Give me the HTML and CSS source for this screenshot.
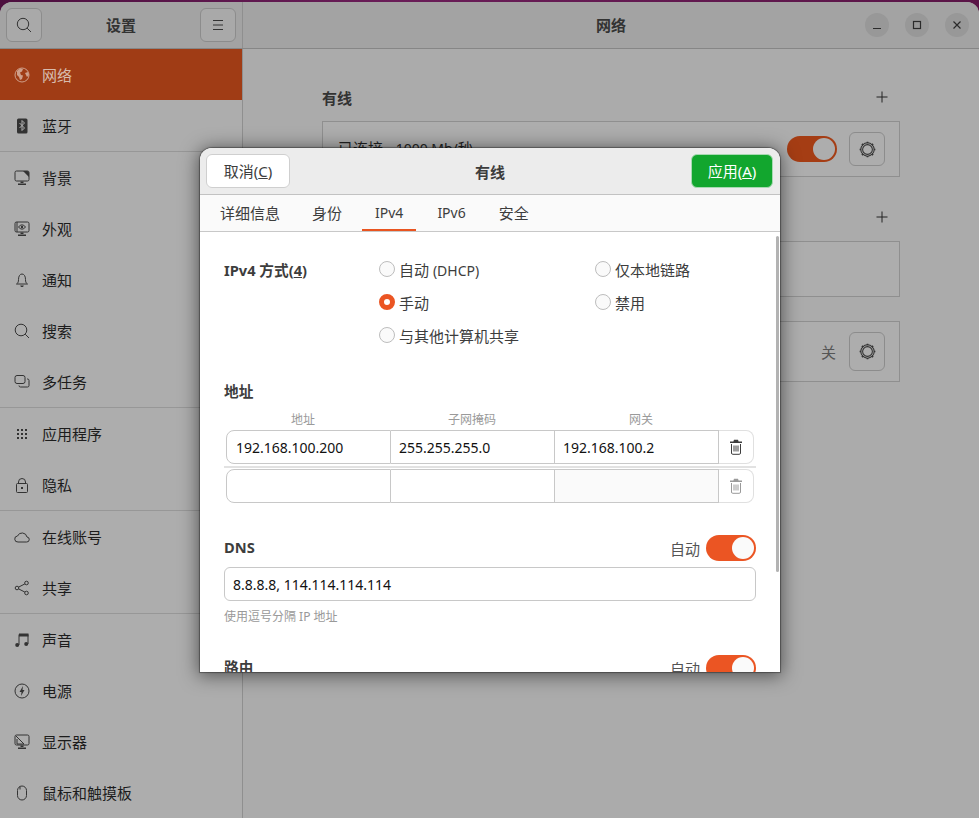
FILE: index.html
```html
<!DOCTYPE html>
<html lang="zh">
<head>
<meta charset="utf-8">
<title>设置</title>
<link rel="stylesheet" href="styles.css">
</head>
<body>
<div class="window">
  <header class="titlebar">
    <div class="tb-left">
      <button class="tb-btn"><svg viewBox="0 0 16 16" class="ic"><circle cx="7" cy="7" r="5.700"/><path d="M11.100 11.100l3.900 3.900"/></svg></button>
      <div class="tb-title">设置</div>
      <button class="tb-btn"><svg viewBox="0 0 16 16" class="ic"><path d="M3 3.500h10M3 8h10M3 12.500h10"/></svg></button>
    </div>
    <div class="tb-right">
      <div class="tb-title">网络</div>
      <div class="wm">
        <span class="wm-btn"><svg viewBox="0 0 16 16" class="ic ic-wm"><path d="M4 11.500h8"/></svg></span>
        <span class="wm-btn"><svg viewBox="0 0 16 16" class="ic ic-wm"><rect x="4.500" y="4.500" width="7" height="7"/></svg></span>
        <span class="wm-btn"><svg viewBox="0 0 16 16" class="ic ic-wm"><path d="M4.500 4.500l7 7M11.500 4.500l-7 7"/></svg></span>
      </div>
    </div>
  </header>
  <div class="panes">
    <nav class="sidebar">
      <div class="item active"><svg viewBox="0 0 16 16" class="ic"><circle cx="8" cy="8" r="7"/><path class="fill" d="M3 4l3-2.500 3 .5-1 2.500-2 1 1 2.500 2 .5-1 3.500-2 1-1-3-2-2zM11 6l3-1 1 3-2 2z"/></svg><span>网络</span></div>
      <div class="item"><svg viewBox="0 0 16 16" class="ic"><rect class="fill" x="3" y="0.500" width="10.500" height="15" rx="1.500"/><path class="knock" d="M5.500 5l5 5-2.500 2.500v-10l2.500 2.500-5 5"/></svg><span>蓝牙</span></div>
      <div class="sep"></div>
      <div class="item"><svg viewBox="0 0 16 16" class="ic"><path d="M9 1H2.500A1.500 1.500 0 0 0 1 2.500v7A1.500 1.500 0 0 0 2.500 11h11a1.500 1.500 0 0 0 1.500-1.500V2.500A1.500 1.500 0 0 0 13.500 1z"/><path class="fill" d="M9 1h4.500L15 2.500V7zM6.500 11.500h3v1.500h-3zM4 13.500h8V15H4z"/></svg><span>背景</span></div>
      <div class="item"><svg viewBox="0 0 16 16" class="ic"><rect x="1" y="1" width="14" height="10" rx="1.500"/><path d="M3 1v10M4.500 6c2-2.800 5-2.800 7 0-2 2.800-5 2.800-7 0z"/><circle class="fill" cx="8" cy="6" r="1.200"/><path class="fill" d="M6.500 11.500h3v1.500h-3zM4 13.500h8V15H4z"/></svg><span>外观</span></div>
      <div class="item"><svg viewBox="0 0 16 16" class="ic"><path d="M2.500 12h11c-1.500-1-2-2-2-4.500C11.500 4 10 2 8 2S4.500 4 4.500 7.500C4.500 10 4 11 2.500 12z"/><path class="fill" d="M6.200 13.500h3.600c-.3 1-1 1.500-1.800 1.500s-1.500-.5-1.800-1.500z"/></svg><span>通知</span></div>
      <div class="item"><svg viewBox="0 0 16 16" class="ic"><circle cx="7" cy="7" r="5.800"/><path d="M11.200 11.200l3.800 3.800"/></svg><span>搜索</span></div>
      <div class="item"><svg viewBox="0 0 16 16" class="ic"><rect x="1" y="1.500" width="10" height="8" rx="2"/><path d="M13 5h.500A1.500 1.500 0 0 1 15 6.500v5a1.500 1.500 0 0 1-1.500 1.500h-7A1.500 1.500 0 0 1 5 11.500"/></svg><span>多任务</span></div>
      <div class="sep"></div>
      <div class="item"><svg viewBox="0 0 16 16" class="ic"><path class="fill" d="M3 3h2v2H3zM7 3h2v2H7zM11 3h2v2h-2zM3 7h2v2H3zM7 7h2v2H7zM11 7h2v2h-2zM3 11h2v2H3zM7 11h2v2H7zM11 11h2v2h-2z"/></svg><span>应用程序</span></div>
      <div class="item"><svg viewBox="0 0 16 16" class="ic"><rect x="2.500" y="6.500" width="11" height="9" rx="1"/><path d="M4.500 6.500V5a3.500 3.500 0 0 1 7 0v1.500"/><rect class="fill" x="7" y="10" width="2" height="2"/></svg><span>隐私</span></div>
      <div class="sep"></div>
      <div class="item"><svg viewBox="0 0 16 16" class="ic"><path d="M4 13h8.500a2.500 2.500 0 0 0 .500-5 5 5 0 0 0-9.500-1A3 3 0 0 0 4 13z"/></svg><span>在线账号</span></div>
      <div class="item"><svg viewBox="0 0 16 16" class="ic"><circle cx="3" cy="8" r="1.800"/><circle cx="12.500" cy="3" r="1.800"/><circle cx="12.500" cy="13" r="1.800"/><path d="M4.600 7.100l6.300-3.200M4.600 8.900l6.300 3.200"/></svg><span>共享</span></div>
      <div class="sep"></div>
      <div class="item"><svg viewBox="0 0 16 16" class="ic"><path d="M5 13V2.500h9V12"/><path class="fill" d="M5 1.500h9.500v3H5z"/><circle class="fill" cx="3.200" cy="13" r="2"/><circle class="fill" cx="12.200" cy="12" r="2"/></svg><span>声音</span></div>
      <div class="item"><svg viewBox="0 0 16 16" class="ic"><circle cx="8" cy="8" r="7"/><path class="fill" d="M9 3L5.500 9h2L7 13l3.500-6h-2z"/></svg><span>电源</span></div>
      <div class="item"><svg viewBox="0 0 16 16" class="ic"><rect x="1" y="1" width="14" height="10" rx="1.500"/><path d="M2 2l8 8H3V5"/><path class="fill" d="M6.500 11.500h3v1.500h-3zM4 13.500h8V15H4z"/></svg><span>显示器</span></div>
      <div class="item"><svg viewBox="0 0 16 16" class="ic"><rect x="3.500" y="1" width="9" height="14" rx="4.500"/><path d="M6 1.500v3"/></svg><span>鼠标和触摸板</span></div>
    </nav>
    <main class="content">
      <div class="sec-head"><h2>有线</h2><svg viewBox="0 0 16 16" class="ic plus"><path d="M8 2.500v11M2.500 8h11"/></svg></div>
      <div class="card card-a">
        <span class="conn">已连接 - <span class="lat">1000 Mb/</span>秒</span>
        <span class="switch switch-dim"><i></i></span>
        <button class="gear-btn"><svg viewBox="0 0 16 16" class="ic gear"><circle cx="8" cy="8" r="6.300"/><circle cx="8" cy="8" r="4.600"/><path class="dash" d="M8 .6v1.400M8 14v1.400M.6 8H2M14 8h1.400M2.800 2.800l1 1M12.200 12.200l1 1M2.800 13.200l1-1M12.200 3.800l1-1"/></svg></button>
      </div>
      <div class="sec-head sec-2"><h2>&nbsp;</h2><svg viewBox="0 0 16 16" class="ic plus"><path d="M8 2.500v11M2.500 8h11"/></svg></div>
      <div class="card card-b"></div>
      <div class="card card-c">
        <span class="off">关</span>
        <button class="gear-btn gear-tall"><svg viewBox="0 0 16 16" class="ic gear"><circle cx="8" cy="8" r="6.300"/><circle cx="8" cy="8" r="4.600"/><path class="dash" d="M8 .6v1.400M8 14v1.400M.6 8H2M14 8h1.400M2.800 2.800l1 1M12.200 12.200l1 1M2.800 13.200l1-1M12.200 3.800l1-1"/></svg></button>
      </div>
    </main>
  </div>
</div>

<section class="dialog">
  <header class="dlg-head">
    <button class="btn-cancel">取消(<u>C</u>)</button>
    <div class="dlg-title">有线</div>
    <button class="btn-apply">应用(<u>A</u>)</button>
  </header>
  <div class="tabs">
    <span class="tab t1">详细信息</span>
    <span class="tab t2">身份</span>
    <span class="tab t3 on lat">IPv4</span>
    <span class="tab t4 lat">IPv6</span>
    <span class="tab t5">安全</span>
  </div>
  <div class="dlg-body">
    <div class="scrollbar"></div>
    <div class="method">
      <div class="bold method-label">IPv4 方式(<u>4</u>)</div>
      <div class="radios">
        <label class="radio"><i></i><span>自动 <span class="lat">(DHCP)</span></span></label>
        <label class="radio"><i></i><span>仅本地链路</span></label>
        <label class="radio sel"><i></i><span>手动</span></label>
        <label class="radio"><i></i><span>禁用</span></label>
        <label class="radio"><i></i><span>与其他计算机共享</span></label>
      </div>
    </div>
    <div class="bold addr-title">地址</div>
    <div class="cols"><span>地址</span><span>子网掩码</span><span>网关</span></div>
    <div class="addr-row">
      <div class="cell first">192.168.100.200</div>
      <div class="cell">255.255.255.0</div>
      <div class="cell">192.168.100.2</div>
      <div class="del"><svg viewBox="0 0 16 16" class="ic trash"><path class="fill" d="M6 .8h4l.6 1.700H14v1.500H2V2.500h3.400z"/><path d="M3.500 5v9a1.300 1.300 0 0 0 1.300 1.300h6.400a1.300 1.300 0 0 0 1.300-1.300V5M6 6.500v6M8 6.500v6M10 6.500v6"/></svg></div>
    </div>
    <div class="addr-line"></div>
    <div class="addr-row">
      <div class="cell first"></div>
      <div class="cell"></div>
      <div class="cell shade"></div>
      <div class="del dim"><svg viewBox="0 0 16 16" class="ic trash"><path class="fill" d="M6 .8h4l.6 1.700H14v1.500H2V2.500h3.400z"/><path d="M3.500 5v9a1.300 1.300 0 0 0 1.300 1.300h6.400a1.300 1.300 0 0 0 1.300-1.300V5M6 6.500v6M8 6.500v6M10 6.500v6"/></svg></div>
    </div>
    <div class="head-row dns-head">
      <span class="bold">DNS</span>
      <span class="auto">自动<span class="switch"><i></i></span></span>
    </div>
    <div class="entry">8.8.8.8, 114.114.114.114</div>
    <div class="hint">使用逗号分隔 IP 地址</div>
    <div class="head-row route-head">
      <span class="bold">路由</span>
      <span class="auto">自动<span class="switch"><i></i></span></span>
    </div>
  </div>
</section>
</body>
</html>
```
FILE: styles.css
```css
* { box-sizing: border-box; }
html, body { margin: 0; height: 100%; overflow: hidden; }
body {
  background: linear-gradient(90deg, #4c0f3e, #6a1d58 40%, #5a1547);
  font-family: "Noto Sans", "Noto Sans CJK SC", sans-serif;
  font-size: 15px;
  color: #1c1c1c;
}
button { font: inherit; padding: 0; }
.lat { font-size: 14px; }
.ic { width: 16px; height: 16px; fill: none; stroke: #333; stroke-width: 1; flex: none; display: block; }
.ic .fill { fill: #333; stroke: none; }
.ic .knock { stroke: #b0b0b0; fill: none; }

.window {
  margin-top: 2px;
  height: 816px;
  border-radius: 12px 12px 0 0;
  overflow: hidden;
  background: #ababab;
  display: flex;
  flex-direction: column;
}
.titlebar {
  height: 47px;
  flex: none;
  display: flex;
  background: #a3a3a3;
  border-bottom: 1px solid #868686;
}
.tb-left {
  width: 243px;
  flex: none;
  display: flex;
  align-items: center;
  justify-content: space-between;
  padding: 0 6px 1px;
  border-right: 1px solid #8f8f8f;
}
.tb-btn {
  width: 36px;
  height: 34px;
  border: 1px solid #8c8c8c;
  border-radius: 6px;
  background: #a9a9a9;
  display: flex;
  align-items: center;
  justify-content: center;
}
.tb-title { font-weight: 700; color: #333; }
.tb-right {
  flex: 1;
  display: flex;
  align-items: center;
  justify-content: center;
  position: relative;
  padding-bottom: 1px;
}
.wm { position: absolute; right: 10px; top: 11px; display: flex; gap: 16px; }
.wm-btn {
  width: 24px;
  height: 24px;
  border-radius: 50%;
  background: #989898;
  display: flex;
  align-items: center;
  justify-content: center;
}
.ic-wm { stroke: #2b2b2b; stroke-width: 1.200; }

.panes { flex: 1; display: flex; min-height: 0; }
.sidebar {
  width: 243px;
  flex: none;
  background: #adadad;
  border-right: 1px solid #8f8f8f;
}
.item {
  height: 51px;
  display: flex;
  align-items: center;
  gap: 12px;
  padding-left: 14px;
}
.item.active { background: #a03c15; color: #d8bcae; }
.item.active .ic { stroke: #cf9f8a; }
.item.active .ic .fill { fill: #cf9f8a; }
.sep { height: 1px; background: #979797; }

.content { flex: 1; padding: 36px 0 0 79px; }
.sec-head { width: 578px; height: 36px; display: flex; align-items: flex-start; justify-content: space-between; padding-right: 10px; }
.sec-head h2 { margin: 1px 0 0; font-size: 15px; font-weight: 700; color: #333; line-height: 24px; }
.sec-head .plus { margin-top: 4px; stroke: #222; }
.sec-2 { margin-top: 28px; }
.card {
  width: 578px;
  border: 1px solid #8f8f8f;
  background: #adadad;
  display: flex;
  align-items: center;
  justify-content: flex-end;
  padding-right: 14px;
}
.card-a { height: 56px; position: relative; }
.card-b { height: 56px; }
.card-c { height: 61px; margin-top: 24px; }
.conn { position: absolute; left: 15px; top: 15px; color: #222; }
.off { margin-right: 13px; color: #555; }
.gear-btn {
  width: 36px;
  height: 34px;
  border: 1px solid #8c8c8c;
  border-radius: 6px;
  background: #adadad;
  display: flex;
  align-items: center;
  justify-content: center;
}
.gear-tall { height: 39px; }
.gear { width: 17px; height: 17px; }
.gear circle { stroke-width: 1; }
.gear .dash { stroke-width: 1.600; }
.switch {
  width: 50px;
  height: 26px;
  border-radius: 13px;
  background: #eb5523;
  display: inline-flex;
  justify-content: flex-end;
  align-items: center;
  padding-right: 2px;
  flex: none;
}
.switch i { width: 22px; height: 22px; border-radius: 50%; background: #fafafa; display: block; }
.switch-dim { background: #a53d14; margin-right: 12px; }
.switch-dim i { background: #adadad; }

.dialog {
  position: absolute;
  left: 200px;
  top: 148px;
  width: 580px;
  height: 524px;
  border-radius: 12px 12px 0 0;
  background: #fff;
  overflow: hidden;
  box-shadow: 0 0 1px 1px rgba(0,0,0,.35), 0 2px 18px 2px rgba(0,0,0,.5);
  display: flex;
  flex-direction: column;
}
.dlg-head {
  height: 47px;
  flex: none;
  background: #ececec;
  border-bottom: 1px solid #c2c2c2;
  display: flex;
  align-items: flex-start;
  justify-content: space-between;
  padding: 6px 7px 0 6px;
  position: relative;
}
.dlg-title { font-weight: 700; color: #3d3d3d; position: absolute; left: 275px; top: 13px; }
.btn-cancel {
  width: 84px;
  height: 34px;
  background: #fff;
  border: 1px solid #cfcfcf;
  border-radius: 6px;
  color: #3d3d3d;
  padding-bottom: 2px;
}
.btn-apply {
  width: 82px;
  height: 34px;
  background: #12a62e;
  border: 1px solid #a8d9b2;
  border-radius: 6px;
  color: #fff;
  padding-bottom: 2px;
}
.tabs {
  height: 37px;
  flex: none;
  background: #fafafa;
  border-bottom: 1px solid #c8c8c8;
  display: flex;
  color: #3d3d3d;
}
.tab { display: flex; align-items: center; height: 36px; padding: 0 13px 2px; }
.t1 { margin-left: 7px; }
.t2 { margin-left: 6px; }
.t3 { margin-left: 7px; }
.t4 { margin-left: 8px; }
.t5 { margin-left: 7px; }
.tab.on { box-shadow: inset 0 -2px 0 #e95420; }
.dlg-body { flex: 1; position: relative; padding: 26px 24px 0; color: #3d3d3d; min-height: 0; overflow: hidden; }
.scrollbar { position: absolute; right: 1px; top: 4px; width: 3px; height: 336px; background: #b3b3b3; border-radius: 2px; }
.bold { font-weight: 700; font-size: 14.67px; color: #3d3d3d; }
.method { display: flex; }
.method-label { width: 155px; line-height: 24px; flex: none; }
.radios { display: grid; grid-template-columns: 216px 1fr; row-gap: 9px; }
.radio { display: flex; align-items: center; gap: 4px; height: 24px; }
.radio > span { margin-top: -2px; }
.radio i {
  width: 16px;
  height: 16px;
  border-radius: 50%;
  border: 1px solid #bdbdbd;
  background: #fafafa;
  display: block;
  flex: none;
  position: relative;
  top: -1px;
}
.radio.sel i { border: 5px solid #eb5523; background: #fff; }
.addr-title { margin-top: 31px; line-height: 24px; }
.cols { display: grid; grid-template-columns: 154px 184px 154px; margin: 9px 0 0 2px; height: 16px; font-size: 12px; line-height: 16px; color: #9a9a9a; text-align: center; }
.addr-row { display: flex; height: 34px; margin: 2px 2px 0; color: #111; width: 528px; }
.addr-line { height: 2px; background: #e2e2e2; margin-top: 2px; margin-bottom: 1px; width: 532px; }
.addr-line + .addr-row { margin-top: 0; }
.cell {
  width: 164px;
  border: 1px solid #c8c8c8;
  border-left: 0;
  padding-left: 8px;
  font-size: 14px;
  line-height: 33px;
  background: #fff;
}
.cell.first { width: 165px; border-left: 1px solid #c8c8c8; border-radius: 8px 0 0 8px; padding-left: 9px; }
.cell.shade { background: #fafafa; }
.del {
  width: 35px;
  border: 1px solid #e0e0e0;
  border-left: 0;
  border-radius: 0 8px 8px 0;
  display: flex;
  align-items: center;
  justify-content: center;
}
.trash { stroke: #3d3d3d; }
.trash .fill { fill: #3d3d3d; }
.dim .trash { stroke: #9a9a9a; }
.dim .trash .fill { fill: #9a9a9a; }
.head-row { display: flex; align-items: center; justify-content: space-between; height: 26px; width: 532px; }
.head-row .bold { margin-top: -3px; }
.dns-head { margin-top: 32px; }
.route-head { margin-top: 29px; }
.auto { display: flex; align-items: center; gap: 6px; color: #555; }
.entry {
  margin-top: 6px;
  width: 532px;
  height: 34px;
  border: 1px solid #c8c8c8;
  border-radius: 6px;
  padding-left: 8px;
  font-size: 14px;
  line-height: 33px;
  color: #111;
}
.hint { margin-top: 7px; font-size: 12px; line-height: 18px; color: #999; }
```
